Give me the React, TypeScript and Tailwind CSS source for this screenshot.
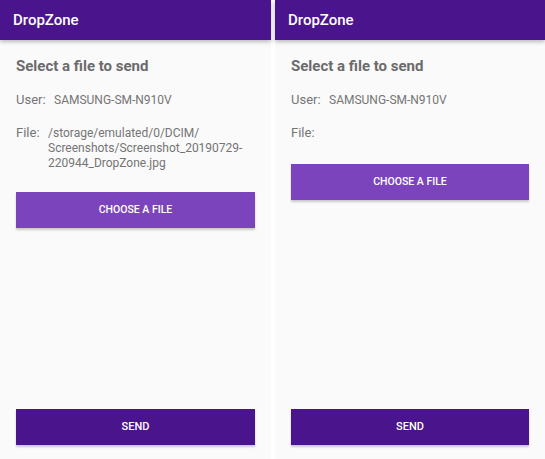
import React from "react";

interface ScreenProps {
  path?: string[];
  className?: string;
}

const Screen = ({ path, className }: ScreenProps) => {
  return (
    <div className={"flex h-[459px] flex-col bg-[#fafafa] " + className}>
      <div className="relative z-10 flex h-10 items-center bg-[#4a148c] px-[13px] shadow-[0_2px_4px_rgba(0,0,0,0.25)]">
        <span className="text-[15px] font-medium text-white">DropZone</span>
      </div>

      <div className="flex flex-1 flex-col px-4">
        <div className="mt-4 text-[15px] leading-5 font-bold text-[#6b6b6b]">
          Select a file to send
        </div>

        <div className="mt-[14px] flex items-baseline leading-5 text-[#757575]">
          <span className="w-[38px] text-[13px]">User:</span>
          <span className="text-[12px]">SAMSUNG-SM-N910V</span>
        </div>

        {/* file row */}
        <div className="mt-[15px] flex items-baseline leading-[15px] text-[#757575]">
          <span className="w-8 text-[13px]">File:</span>
          {path && (
            <span className="text-[12px]">
              {path.map((l, i) => (
                <span key={i} className="block">
                  {l}
                </span>
              ))}
            </span>
          )}
        </div>

        <button
          className={
            path
              ? "mt-[21px] h-9 w-full bg-[#7b44bc] text-[10.5px] font-medium text-white shadow-[0_2px_2px_rgba(0,0,0,0.2)]"
              : "mt-[24px] h-9 w-full bg-[#7b44bc] text-[10.5px] font-medium text-white shadow-[0_2px_2px_rgba(0,0,0,0.2)]"
          }
        >
          CHOOSE A FILE
        </button>

        <button className="mt-auto mb-[14px] h-9 w-full bg-[#4a148c] text-[11px] font-medium text-white shadow-[0_2px_2px_rgba(0,0,0,0.2)]">
          SEND
        </button>
      </div>
    </div>
  );
};

export default function App() {
  return (
    <div
      className="flex h-[459px] w-[545px] gap-1 bg-white"
      style={{ fontFamily: "Roboto, 'Liberation Sans', sans-serif" }}
    >
      <Screen
        className="w-[271px]"
        path={[
          "/storage/emulated/0/DCIM/",
          "Screenshots/Screenshot_20190729-",
          "220944_DropZone.jpg",
        ]}
      />
      <Screen className="flex-1" />
    </div>
  );
}
